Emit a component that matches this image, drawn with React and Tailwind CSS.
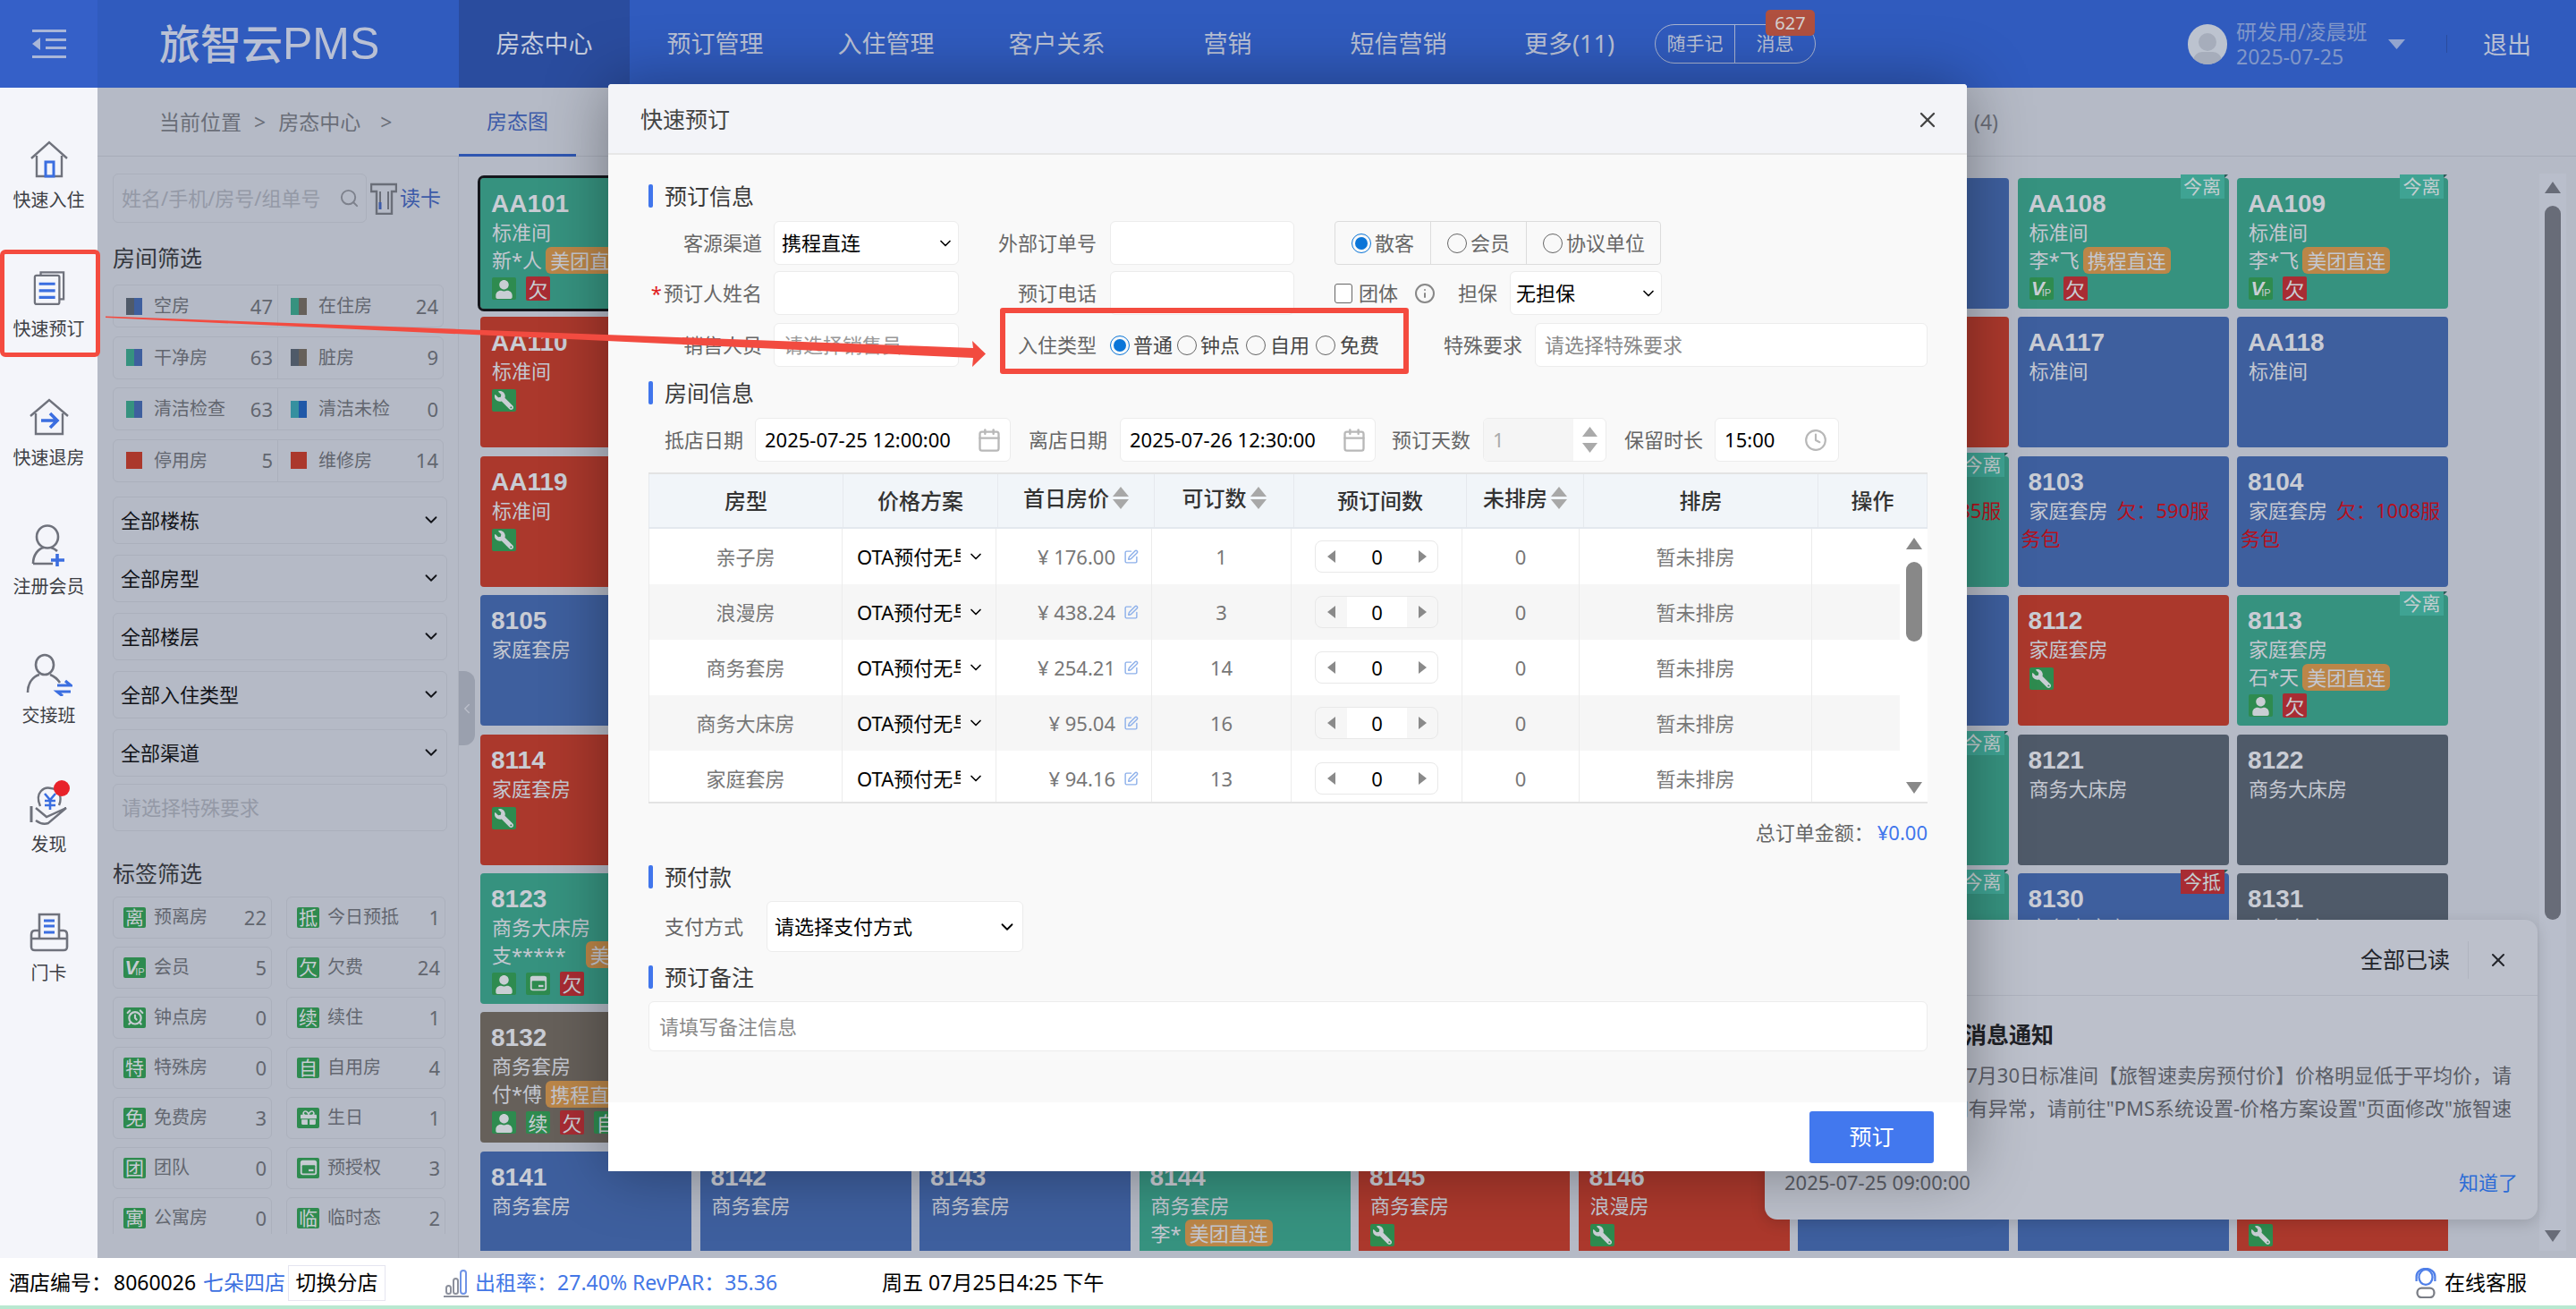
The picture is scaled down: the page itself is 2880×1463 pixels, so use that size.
import { Search, ChevronDown, ChevronLeft, Calendar, Clock, Info, SquarePen, X, AlarmClock } from "lucide-react";
import { FaUser, FaWrench, FaGift } from "react-icons/fa";

const GREEN = "bg-[#36927f]";
const BLUE = "bg-[#3e5f9e]";
const RED = "bg-[#ab382c]";
const GRAY = "bg-[#4f5a69]";
const BROWN = "bg-[#66605a]";

const navItems = ["房态中心", "预订管理", "入住管理", "客户关系", "营销", "短信营销", "更多(11)"];

const statRows = [
  [{ a: "bg-[#4f5a69]", b: "bg-[#3e5f9e]", name: "空房", n: 47 }, { a: "bg-[#36927f]", b: "bg-[#66605a]", name: "在住房", n: 24 }],
  [{ a: "bg-[#36927f]", b: "bg-[#3e5f9e]", name: "干净房", n: 63 }, { a: "bg-[#4f5a69]", b: "bg-[#66605a]", name: "脏房", n: 9 }],
  [{ a: "bg-[#36927f]", b: "bg-[#3e5f9e]", name: "清洁检查", n: 63 }, { a: "bg-[#36909f]", b: "bg-[#1f58a8]", name: "清洁未检", n: 0 }],
  [{ a: "bg-[#ab382c]", b: "bg-[#ab382c]", name: "停用房", n: 5 }, { a: "bg-[#ab382c]", b: "bg-[#ab382c]", name: "维修房", n: 14 }],
];

const tagRows = [
  [{ i: "离", name: "预离房", n: 22 }, { i: "抵", name: "今日预抵", n: 1 }],
  [{ i: "vip", name: "会员", n: 5 }, { i: "欠", name: "欠费", n: 24 }],
  [{ i: "clock", name: "钟点房", n: 0 }, { i: "续", name: "续住", n: 1 }],
  [{ i: "特", name: "特殊房", n: 0 }, { i: "自", name: "自用房", n: 4 }],
  [{ i: "免", name: "免费房", n: 3 }, { i: "gift", name: "生日", n: 1 }],
  [{ i: "团", name: "团队", n: 0 }, { i: "card", name: "预授权", n: 3 }],
  [{ i: "寓", name: "公寓房", n: 0 }, { i: "临", name: "临时态", n: 2 }],
];

// 8 rows x 9 cols, cards fully under the modal or the popup stay blank
const hidden = { c: BLUE };
const rooms = [
  [
    { no: "AA101", type: "标准间", c: GREEN, guest: "新*人", ch: "美团直连", icons: ["user", "owe"], selected: true },
    hidden, hidden, hidden, hidden, hidden, hidden,
    { no: "AA108", type: "标准间", c: GREEN, guest: "李*飞", ch: "携程直连", icons: ["vip", "owe"], corner: "今离" },
    { no: "AA109", type: "标准间", c: GREEN, guest: "李*飞", ch: "美团直连", icons: ["vip", "owe"], corner: "今离" },
  ],
  [
    { no: "AA110", type: "标准间", c: RED, icons: ["wrench"] },
    hidden, hidden, hidden, hidden, hidden,
    { c: RED },
    { no: "AA117", type: "标准间", c: BLUE }, { no: "AA118", type: "标准间", c: BLUE },
  ],
  [
    { no: "AA119", type: "标准间", c: RED, icons: ["wrench"] },
    hidden, hidden, hidden, hidden, hidden,
    { no: "8102", type: "家庭套房", c: GREEN, owe: "欠：1085服务包", corner: "今离" },
    { no: "8103", type: "家庭套房", c: BLUE, owe: "欠：590服务包" },
    { no: "8104", type: "家庭套房", c: BLUE, owe: "欠：1008服务包" },
  ],
  [
    { no: "8105", type: "家庭套房", c: BLUE },
    hidden, hidden, hidden, hidden, hidden, hidden,
    { no: "8112", type: "家庭套房", c: RED, icons: ["wrench"] },
    { no: "8113", type: "家庭套房", c: GREEN, guest: "石*天", ch: "美团直连", icons: ["user", "owe"], corner: "今离" },
  ],
  [
    { no: "8114", type: "家庭套房", c: RED, icons: ["wrench"] },
    hidden, hidden, hidden, hidden, hidden,
    { c: GREEN, corner: "今离" },
    { no: "8121", type: "商务大床房", c: GRAY }, { no: "8122", type: "商务大床房", c: GRAY },
  ],
  [
    { no: "8123", type: "商务大床房", c: GREEN, guest: "支*****", ch: "美团直连", icons: ["user", "card", "owe"], gap: true },
    hidden, hidden, hidden, hidden, hidden,
    { c: GREEN, corner: "今离" },
    { no: "8130", type: "商务大床房", c: BLUE, corner: "今抵" },
    { no: "8131", type: "商务套房", c: GRAY },
  ],
  [
    { no: "8132", type: "商务套房", c: BROWN, guest: "付*傅", ch: "携程直连", icons: ["user", "xu", "owe", "zi"] },
    hidden, hidden, hidden, hidden, hidden, hidden, hidden, hidden,
  ],
  [
    { no: "8141", type: "商务套房", c: BLUE }, { no: "8142", type: "商务套房", c: BLUE }, { no: "8143", type: "商务套房", c: BLUE },
    { no: "8144", type: "商务套房", c: GREEN, guest: "李*", ch: "美团直连" },
    { no: "8145", type: "商务套房", c: RED, icons: ["wrench"] },
    { no: "8146", type: "浪漫房", c: RED, icons: ["wrench"] },
    hidden, hidden,
    { c: RED, blankHead: true, icons: ["wrench"] },
  ],
];

const tableRows = [
  { name: "亲子房", price: "¥ 176.00", left: 1 },
  { name: "浪漫房", price: "¥ 438.24", left: 3 },
  { name: "商务套房", price: "¥ 254.21", left: 14 },
  { name: "商务大床房", price: "¥ 95.04", left: 16 },
  { name: "家庭套房", price: "¥ 94.16", left: 13 },
];

function CardGlyph({ className }) {
  return (
    <svg viewBox="0 0 24 24" className={className}>
      <rect x="2" y="3" width="20" height="18" rx="3" fill="currentColor" />
      <rect x="4" y="9" width="16" height="10" rx="1" fill="#2e8b4f" />
      <rect x="12" y="14" width="6" height="2.5" fill="currentColor" />
    </svg>
  );
}

function VipGlyph() {
  return (
    <span className="flex items-end h-[23px] [font-family:'Liberation_Sans',sans-serif] leading-none">
      <span className="text-[22px] font-bold italic">V</span>
      <span className="text-[11px] -ml-[3px] mb-[1px]">IP</span>
    </span>
  );
}

function TagIcon({ i }) {
  let body = <span className="text-[21px] leading-[23px]">{i}</span>;
  if (i === "vip") body = <VipGlyph />;
  if (i === "clock") body = <AlarmClock size={20} strokeWidth={2.6} />;
  if (i === "gift") body = <FaGift size={18} />;
  if (i === "card") body = <CardGlyph className="w-[22px] h-[22px]" />;
  return (
    <span className="w-[25px] h-[23px] shrink-0 rounded-[2px] bg-[#2e8b4f] text-[#c6ccd2] flex items-center justify-center">
      {body}
    </span>
  );
}

function RoomIcon({ k }) {
  const green = "w-[27px] h-[25px] rounded-[2px] bg-[#2e8b4f] text-[#c9ced4] flex items-center justify-center overflow-hidden";
  if (k === "owe") {
    return <span className="w-[27px] h-[27px] -my-[1px] rounded-[2px] bg-[#a82c33] text-[#c9ced4] text-[22px] leading-none flex items-center justify-center">欠</span>;
  }
  if (k === "user") return <span className={green}><FaUser size={21} className="mt-[2px]" /></span>;
  if (k === "wrench") return <span className={green}><FaWrench size={21} className="-scale-x-100" /></span>;
  if (k === "vip") return <span className={green}><VipGlyph /></span>;
  if (k === "card") return <span className={green}><CardGlyph className="w-[22px] h-[22px]" /></span>;
  return <span className={green + " text-[22px] leading-none"}>{k === "xu" ? "续" : "自"}</span>;
}

function RoomCard({ room }) {
  return (
    <div className={`relative h-[146px] rounded-[4px] ${room.c} pt-[12px] ${room.selected ? "outline-[3px] outline-[#14171c]" : ""}`}>
      {room.corner && (
        <div className={`absolute -top-[4px] right-[5px] w-[49px] h-[27px] text-[21px] leading-[27px] text-center text-[#c4ced0] ${room.corner === "今抵" ? "bg-[#a82c33]" : "bg-[#3fa393]"}`}>
          {room.corner}
          <span className="absolute top-0 -right-[4px] border-l-[4px] border-b-[4px] border-l-[#2a5c58] border-b-transparent" />
        </div>
      )}
      <div className="h-[33px] pl-[12px] text-[28px] leading-[33px] font-bold text-[#c9ccd4] [font-family:'Liberation_Sans',sans-serif]">{room.no}</div>
      <div className={`px-[4px] text-[22px] leading-[31px] text-[#c4c7d0] ${room.type || room.blankHead ? "min-h-[31px]" : ""}`}>
        {room.type && <span className="ml-[9px]">{room.type}</span>}
        {room.owe && <span className="ml-[10px] text-[#b5101c]">{room.owe}</span>}
      </div>
      {room.guest && (
        <div className="pl-[13px] h-[31px] flex items-center whitespace-nowrap overflow-hidden text-[22px] leading-[31px] text-[#c4c7d0]">
          <span>{room.guest}</span>
          <span className={`h-[30px] px-[5px] rounded-[6px] bg-[#bb8648] leading-[30px] ${room.gap ? "ml-[22px]" : "ml-[4px]"}`}>{room.ch}</span>
        </div>
      )}
      {room.icons && (
        <div className={`pl-[13px] flex gap-[11px] ${room.guest ? "mt-[4px]" : "mt-[5px]"}`}>
          {room.icons.map((k, idx) => <RoomIcon k={k} key={idx} />)}
        </div>
      )}
    </div>
  );
}

function SideItem({ icon, label }) {
  return (
    <div className="h-[144px] flex flex-col items-center justify-center">
      <div className="h-[46px] flex items-center justify-center">{icon}</div>
      <div className="mt-[9px] text-[20px] leading-[28px] text-[#3d3f45]">{label}</div>
    </div>
  );
}

function Tri({ dir = "up", className }) {
  const pts = { up: "6,0 12,12 0,12", down: "0,0 12,0 6,12", left: "12,0 12,12 0,6", right: "0,0 0,12 12,6" };
  return (
    <svg viewBox="0 0 12 12" preserveAspectRatio="none" className={className}>
      <polygon points={pts[dir]} fill="currentColor" />
    </svg>
  );
}

function SectionTitle({ children }) {
  return (
    <div className="flex items-center h-[26px]">
      <span className="w-[5px] h-[26px] rounded-[2px] bg-[#4176ec]" />
      <span className="ml-[13px] text-[25px] leading-[26px] text-[#3a3a3a]">{children}</span>
    </div>
  );
}

function Field({ className = "", children }) {
  return <div className={`bg-white border border-[#ececec] rounded-[6px] flex items-center text-[22px] text-black shrink-0 ${className}`}>{children}</div>;
}

function Radio({ checked }) {
  return (
    <span className={`w-[22px] h-[22px] shrink-0 rounded-full border-[1.5px] flex items-center justify-center ${checked ? "border-[#0a75d8]" : "border-[#666]"}`}>
      {checked && <span className="w-[14px] h-[14px] rounded-full bg-[#0a75d8]" />}
    </span>
  );
}

function Label({ className = "", children }) {
  return <div className={`text-[22px] text-[#666] text-right shrink-0 whitespace-nowrap ${className}`}>{children}</div>;
}

function SortHead({ children }) {
  return (
    <div className="flex items-center justify-center gap-[4px]">
      <span className="-mt-[6px]">{children}</span>
      <span className="flex flex-col gap-[3px] -mt-[6px] text-[#a8a8a8]">
        <Tri className="w-[18px] h-[11px]" />
        <Tri dir="down" className="w-[18px] h-[11px]" />
      </span>
    </div>
  );
}

export default function App() {
  return (
    <div className="relative w-[2880px] h-[1463px] overflow-hidden flex flex-col bg-white [font-family:'Noto_Sans','Noto_Sans_CJK_SC',sans-serif]">
      {/* top bar */}
      <header className="h-[98px] shrink-0 flex items-center bg-[#305bbe] text-[#b9c0d4]">
        <div className="w-[109px] h-full flex items-center justify-center bg-[#3560c8]">
          <svg viewBox="0 0 38 32" className="w-[38px] h-[32px] text-[#a9b6d8]">
            <rect x="0" y="0" width="38" height="3" fill="currentColor" />
            <rect x="15" y="10" width="23" height="3" fill="currentColor" />
            <rect x="15" y="19" width="23" height="3" fill="currentColor" />
            <rect x="0" y="29" width="38" height="3" fill="currentColor" />
            <polygon points="9,9 9,23 0,16" fill="currentColor" />
          </svg>
        </div>
        <div className="w-[404px] pl-[69px] text-[46px] leading-none whitespace-nowrap font-medium">
          旅智云<span className="text-[50px] [font-family:'Liberation_Sans',sans-serif] font-normal">PMS</span>
        </div>
        <nav className="flex h-full">
          {navItems.map((item, idx) => (
            <div key={item} className={`w-[191px] h-full flex items-center justify-center text-[27px] ${idx === 0 ? "bg-[#2a4c9e] text-[#c4cbdc]" : ""}`}>{item}</div>
          ))}
        </nav>
        <div className="relative w-[180px] h-[44px] flex items-center rounded-[22px] border border-[#a9b4d0] text-[21px]">
          <div className="w-[89px] h-full flex items-center justify-center border-r border-[#a9b4d0]">随手记</div>
          <div className="flex-1 flex items-center justify-center">消息</div>
          <span className="absolute -top-[17px] right-0 w-[55px] h-[29px] rounded-[5px] bg-[#b0503f] text-[20px] leading-[29px] text-center text-[#d5d0d0]">627</span>
        </div>
        <div className="ml-auto flex items-center pr-[50px]">
          <div className="relative w-[44px] h-[45px] rounded-full bg-[#bcc3cf] overflow-hidden">
            <span className="absolute left-[12px] top-[10px] w-[20px] h-[20px] rounded-full bg-[#a6adbb]" />
            <span className="absolute left-[6px] top-[31px] w-[32px] h-[20px] rounded-full bg-[#a6adbb]" />
          </div>
          <div className="ml-[10px] w-[170px] text-[#8197c8]">
            <div className="text-[23px] leading-[28px] whitespace-nowrap">研发用/凌晨班</div>
            <div className="text-[23px] leading-[28px]">2025-07-25</div>
          </div>
          <Tri dir="down" className="w-[19px] h-[11px] text-[#93a5cf]" />
          <span className="ml-[46px] w-px h-[20px] bg-[#2a4c9e]" />
          <span className="ml-[40px] text-[27px] leading-none">退出</span>
        </div>
      </header>

      <div className="flex-1 min-h-0 flex">
        {/* sidebar, stays above the mask */}
        <aside className="relative z-20 w-[109px] shrink-0 bg-[#f4f5fa] pt-[26px]">
          <SideItem label="快速入住" icon={
            <svg viewBox="0 0 42 42" fill="none" className="w-[42px] h-[42px]" stroke="#6f727c" strokeWidth="2.4">
              <path d="M1 20 L21 2 L41 20" />
              <path d="M7 17 V40 H35 V17" />
              <rect x="17" y="24" width="9" height="16" stroke="#3b6ee0" strokeWidth="3" />
            </svg>
          } />
          <SideItem label="快速预订" icon={
            <svg viewBox="0 0 38 40" fill="none" className="w-[36px] h-[38px]" stroke="#6f727c" strokeWidth="2.4">
              <path d="M9 5 V1.5 H36 V33 H31" />
              <rect x="2" y="5" width="29" height="34" rx="2" />
              <path d="M7 15 H26 M7 23 H26 M7 31 H26" stroke="#3b6ee0" strokeWidth="3.4" />
            </svg>
          } />
          <SideItem label="快速退房" icon={
            <svg viewBox="0 0 44 42" fill="none" className="w-[44px] h-[42px]" stroke="#6f727c" strokeWidth="2.4">
              <path d="M1 20 L22 2 L43 20" />
              <path d="M7 17 V40 H37 V17" />
              <path d="M13 25 H30 M23 17 L31 25 L23 33" stroke="#3b6ee0" strokeWidth="3.6" />
            </svg>
          } />
          <SideItem label="注册会员" icon={
            <svg viewBox="0 0 40 48" fill="none" className="w-[40px] h-[48px]" stroke="#6f727c" strokeWidth="2.6">
              <ellipse cx="18" cy="14" rx="12" ry="12.5" />
              <path d="M2 44 C2 34 8 27 14 26 M22 26 C25 27 27 28 29 30 M2 44 H24" />
              <path d="M29 33 V47 M22 40 H37" stroke="#3b6ee0" strokeWidth="3.6" />
            </svg>
          } />
          <SideItem label="交接班" icon={
            <svg viewBox="0 0 52 48" fill="none" className="w-[52px] h-[48px]" stroke="#6f727c" strokeWidth="2.6">
              <ellipse cx="21" cy="13" rx="10" ry="11" />
              <path d="M2 44 C2 33 8 26 15 24 M27 24 C32 26 36 30 38 33" />
              <path d="M35 36 H50 L44 31 M50 43 H35 L41 48" stroke="#3b6ee0" strokeWidth="3.2" />
            </svg>
          } />
          <SideItem label="发现" icon={
            <div className="relative w-[50px] h-[50px]">
              <svg viewBox="0 0 50 50" fill="none" className="w-[50px] h-[50px]" stroke="#6f727c" strokeWidth="2.4">
                <path d="M15 28 C8 12 20 6 27 8 C36 9 40 18 36 27" />
                <path d="M5 28 V46" strokeWidth="3" />
                <path d="M10 30 L22 40 L44 30 L24 47 C18 49 14 47 10 44" />
                <path d="M20 14 L26 21 L32 14 M26 21 V32 M20 22 H32 M20 27 H32" stroke="#3b6ee0" strokeWidth="2.6" />
              </svg>
              <span className="absolute -top-[1px] right-[2px] w-[18px] h-[18px] rounded-full bg-[#e8222a]" />
            </div>
          } />
          <SideItem label="门卡" icon={
            <svg viewBox="0 0 44 44" fill="none" className="w-[44px] h-[44px]" stroke="#6f727c" strokeWidth="2.6">
              <path d="M11 29 V2 H33 V29" />
              <path d="M11 20 H6 C3 20 2 22 2 25 V38 C2 41 3 42 6 42 H38 C41 42 42 41 42 38 V25 C42 22 41 20 38 20 H33 M2 29 H42" />
              <path d="M16 9 H28 M16 15 H28 M16 22 H28" stroke="#3b6ee0" strokeWidth="3" />
            </svg>
          } />
        </aside>

        <main className="relative flex-1 min-w-0 flex flex-col bg-[#b5bac6]">
          <div className="h-[77px] shrink-0 flex border-b border-[#a7acb8]">
            <div className="w-[404px] pl-[69px] flex items-center text-[23px] text-[#6a6e78] whitespace-nowrap">
              <span>当前位置</span>
              <span className="ml-[14px]">&gt;</span>
              <span className="ml-[14px]">房态中心</span>
              <span className="ml-[22px]">&gt;</span>
            </div>
            <div className="w-[131px] border-b-[3px] border-[#2f56b0] -mb-px flex items-center justify-center text-[23px] text-[#3c5aa8]">房态图</div>
            <div className="ml-auto mr-[646px] self-center text-[23px] text-[#6a6e78]">(4)</div>
          </div>

          <div className="flex-1 min-h-0 flex">
            {/* filter panel */}
            <div className="w-[404px] shrink-0 border-r border-[#abb0bc] pl-[17px] pt-[19px]">
              <div className="flex items-center">
                <div className="w-[284px] h-[55px] rounded-[6px] border border-[#abb0bc] flex items-center pl-[9px] text-[22px] text-[#9499a6] whitespace-nowrap">
                  <span className="w-[243px]">姓名/手机/房号/组单号</span>
                  <Search size={23} className="text-[#7d818c]" />
                </div>
                <svg viewBox="0 0 30 36" fill="none" className="ml-[4px] w-[30px] h-[36px]">
                  <path d="M1 2 H29 V10 H24 V35 H7 V10 H1 Z" stroke="#6a6e78" strokeWidth="2.4" />
                  <path d="M11 10 V30 M20 10 V30" stroke="#6a6e78" strokeWidth="2" />
                  <path d="M11 22 V30" stroke="#3c5aa8" strokeWidth="3" />
                </svg>
                <span className="ml-[3px] text-[23px] text-[#3c5aa8] whitespace-nowrap">读卡</span>
              </div>
              <div className="mt-[24px] h-[30px] text-[25px] leading-[30px] text-[#33363d]">房间筛选</div>
              <div className="mt-[15px] w-[370px] flex flex-col gap-[9.5px]">
                {statRows.map((row, idx) => (
                  <div key={idx} className="h-[48px] rounded-[6px] border border-[#abb0bc] grid grid-cols-2">
                    {row.map((s, j) => (
                      <div key={s.name} className={`flex items-center pl-[14px] pr-[5px] text-[20px] text-[#62666f] ${j === 0 ? "border-r border-[#abb0bc]" : ""}`}>
                        <span className="w-[18px] h-[19px] flex mr-[13px] shrink-0">
                          <span className={`flex-1 ${s.a}`} />
                          <span className={`flex-1 ${s.b}`} />
                        </span>
                        <span className="flex-1 whitespace-nowrap">{s.name}</span>
                        <span className="text-[22px]">{s.n}</span>
                      </div>
                    ))}
                  </div>
                ))}
              </div>
              <div className="mt-[16px] w-[374px] flex flex-col gap-[12px]">
                {["全部楼栋", "全部房型", "全部楼层", "全部入住类型", "全部渠道"].map((s) => (
                  <div key={s} className="h-[53px] rounded-[6px] border border-[#abb0bc] flex items-center justify-between pl-[8px] pr-[6px] text-[22px] text-[#111318]">
                    <span>{s}</span>
                    <ChevronDown size={22} />
                  </div>
                ))}
              </div>
              <div className="mt-[8px] w-[374px] h-[53px] rounded-[6px] border border-[#abb0bc] flex items-center pl-[9px] text-[22px] text-[#9499a6]">请选择特殊要求</div>
              <div className="mt-[32px] h-[30px] text-[25px] leading-[30px] text-[#33363d]">标签筛选</div>
              <div className="mt-[11px] h-[377px] overflow-hidden grid grid-cols-[178px_178px] gap-x-[16px] gap-y-[9px] auto-rows-[47px]">
                {tagRows.flat().map((t) => (
                  <div key={t.name} className="rounded-[6px] border border-[#abb0bc] flex items-center pl-[11px] pr-[5px] text-[20px] text-[#62666f]">
                    <TagIcon i={t.i} />
                    <span className="ml-[9px] flex-1 whitespace-nowrap">{t.name}</span>
                    <span className="text-[22px]">{t.n}</span>
                  </div>
                ))}
              </div>
            </div>

            {/* room grid */}
            <div className="relative flex-1 min-w-0 flex pl-[24px] pt-[19px]">
              <span className="absolute left-0 top-[575px] w-[18px] h-[83px] rounded-r-[12px] bg-[#9aa0ae] flex items-center text-[#b9bdc8]">
                <ChevronLeft size={18} />
              </span>
              <div className="w-[2305px] h-[1204px] pt-[5px] pl-[3px] -ml-[3px] overflow-hidden shrink-0">
                <div className="grid grid-cols-[repeat(9,236px)] gap-x-[9.5px] gap-y-[9.4px] auto-rows-[146px]">
                  {rooms.flat().map((room, idx) => <RoomCard room={room} key={idx} />)}
                </div>
              </div>
              <div className="w-[30px] h-[1204px] shrink-0 bg-[#b9becb] flex flex-col items-center pt-[9px] text-[#686c78]">
                <Tri className="w-[18px] h-[13px]" />
                <span className="mt-[14px] w-[18px] h-[798px] rounded-[9px] bg-[#686c78]" />
                <Tri dir="down" className="mt-auto mb-[10px] w-[18px] h-[13px]" />
              </div>
            </div>
          </div>
        </main>
      </div>

      {/* bottom status bar */}
      <footer className="relative z-20 h-[57px] shrink-0 pt-[2px] bg-white border-b-[4px] border-[#b9e8d0] flex items-center text-[23px] text-black">
        <span className="ml-[10px]">酒店编号：</span>
        <span className="ml-[2px]">8060026</span>
        <span className="ml-[8px] text-[#3c6fe0]">七朵四店</span>
        <span className="ml-[3px] w-[109px] h-[40px] border border-[#e5e5f0] flex items-center justify-center">切换分店</span>
        <svg viewBox="0 0 28 32" fill="none" className="ml-[65px] w-[28px] h-[32px]" stroke="#8c909c" strokeWidth="2">
          <rect x="3" y="19" width="5" height="9" rx="2.5" />
          <rect x="11" y="11" width="5" height="17" rx="2.5" />
          <rect x="19" y="2" width="6" height="26" rx="3" stroke="#6f93e6" />
          <path d="M0 31 H28" />
        </svg>
        <span className="ml-[7px] w-[455px] text-[#4477e6] whitespace-nowrap">出租率：27.40% RevPAR：35.36</span>
        <span className="whitespace-nowrap">周五 07月25日4:25 下午</span>
        <span className="ml-auto flex items-center mr-[55px]">
          <svg viewBox="0 0 26 36" fill="none" className="w-[26px] h-[34px]" strokeWidth="2.4">
            <ellipse cx="13" cy="11" rx="8" ry="9" stroke="#4f7fe8" />
            <path d="M2 16 V10 C2 4 8 1 13 1 C18 1 24 4 24 10 V16" stroke="#4f7fe8" />
            <rect x="3" y="24" width="20" height="11" rx="5" stroke="#7a7d85" />
          </svg>
          <span className="ml-[8px]">在线客服</span>
        </span>
      </footer>

      {/* message popup behind the mask */}
      <div className="absolute left-[1973px] top-[1028px] w-[864px] h-[335px] rounded-[14px] bg-[#bcc0cb] shadow-[0_4px_16px_rgba(0,0,0,0.15)] flex flex-col">
        <div className="h-[85px] shrink-0 pt-[6px] border-b border-[#aeb2be] flex items-center justify-end pr-[32px] text-[#23252b]">
          <span className="text-[25px]">全部已读</span>
          <span className="ml-[20px] w-px h-[42px] bg-[#b0b4bf]" />
          <X size={24} className="ml-[21px]" />
        </div>
        <div className="mt-[27px] pl-[23px] text-[25px] leading-[32px] font-bold text-[#1f2126]">价格方案房价异常消息通知</div>
        <div className="mt-[11px] pr-[29px] flex flex-col items-end text-[22px] leading-[37px] text-[#5a5d66] whitespace-nowrap">
          <span>您的门店2025年7月30日标准间【旅智速卖房预付价】价格明显低于平均价，请</span>
          <span>及时确认价格，如有异常，请前往"PMS系统设置-价格方案设置"页面修改"旅智速</span>
        </div>
        <div className="mt-auto mb-[25px] px-[22px] flex items-center justify-between text-[22px]">
          <span className="text-[#5a5d66]">2025-07-25 09:00:00</span>
          <span className="text-[#2c6cd6]">知道了</span>
        </div>
      </div>

      {/* quick booking modal */}
      <div className="absolute left-[680px] top-[94px] w-[1519px] h-[1215px] bg-white rounded-t-[4px] flex flex-col shadow-[0_0_70px_rgba(0,0,0,0.35)]">
        <div className="h-[79px] shrink-0 pt-[2px] bg-[#f3f4f8] border-b-2 border-[#e7e7e7] rounded-t-[4px] flex items-center justify-between pl-[36px] pr-[30px]">
          <span className="text-[25px] text-[#444]">快速预订</span>
          <X size={28} className="text-[#444]" />
        </div>

        <div className="h-[1059px] shrink-0 bg-[#f9f9f9] pl-[45px] pr-[44px] pt-[33px]">
          <SectionTitle>预订信息</SectionTitle>

          <div className="mt-[15px] flex items-center h-[49px]">
            <Label className="w-[127px]">客源渠道</Label>
            <Field className="ml-[13px] w-[207px] h-[49px] pl-[8px] pr-[4px] justify-between">携程直连<ChevronDown size={20} /></Field>
            <Label className="w-[154px]">外部订单号</Label>
            <Field className="ml-[15px] w-[206px] h-[49px]" />
            <div className="ml-[45px] w-[365px] h-[49px] rounded-[4px] border border-[#dcdcdc] flex text-[22px] text-[#666]">
              <div className="w-[107px] pl-[18px] flex items-center gap-[4px] border-r border-[#dcdcdc]"><Radio checked />散客</div>
              <div className="w-[107px] pl-[18px] flex items-center gap-[4px] border-r border-[#dcdcdc]"><Radio />会员</div>
              <div className="flex-1 pl-[18px] flex items-center gap-[4px] whitespace-nowrap"><Radio />协议单位</div>
            </div>
          </div>

          <div className="mt-[7px] flex items-center h-[49px]">
            <Label className="w-[127px]"><span className="text-[#e01c1c] mr-[2px]">*</span>预订人姓名</Label>
            <Field className="ml-[13px] w-[207px] h-[49px]" />
            <Label className="w-[154px]">预订电话</Label>
            <Field className="ml-[15px] w-[206px] h-[49px]" />
            <span className="ml-[45px] w-[20px] h-[22px] rounded-[3px] border-[1.5px] border-[#666] bg-white" />
            <span className="ml-[7px] text-[22px] text-[#666]">团体</span>
            <Info size={24} className="ml-[18px] text-[#888]" />
            <span className="ml-[25px] text-[22px] text-[#666]">担保</span>
            <Field className="ml-[14px] w-[170px] h-[49px] pl-[6px] pr-[4px] justify-between">无担保<ChevronDown size={20} /></Field>
          </div>

          <div className="mt-[9px] flex items-center h-[49px]">
            <Label className="w-[127px]">销售人员</Label>
            <Field className="ml-[13px] w-[207px] h-[49px] pl-[10px] !text-[#999]">请选择销售员</Field>
            <Label className="w-[154px]">入住类型</Label>
            <div className="ml-[15px] w-[373px] flex items-center text-[22px] text-[#444]">
              <Radio checked /><span className="ml-[4px] w-[49px]">普通</span>
              <Radio /><span className="ml-[4px] w-[51px]">钟点</span>
              <Radio /><span className="ml-[5px] w-[51px]">自用</span>
              <Radio /><span className="ml-[5px]">免费</span>
            </div>
            <Label className="w-[88px]">特殊要求</Label>
            <Field className="ml-[14px] flex-1 !shrink h-[49px] pl-[10px] !text-[#888]">请选择特殊要求</Field>
          </div>

          <div className="mt-[16px]"><SectionTitle>房间信息</SectionTitle></div>

          <div className="mt-[15px] pl-[18px] flex items-center h-[49px]">
            <Label>抵店日期</Label>
            <Field className="ml-[13px] w-[286px] h-[49px] pl-[10px] justify-between pr-[9px]">2025-07-25 12:00:00<Calendar size={28} className="text-[#b8b8b8]" /></Field>
            <Label className="ml-[20px]">离店日期</Label>
            <Field className="ml-[14px] w-[286px] h-[49px] pl-[10px] justify-between pr-[9px]">2025-07-26 12:30:00<Calendar size={28} className="text-[#b8b8b8]" /></Field>
            <Label className="ml-[18px]">预订天数</Label>
            <div className="ml-[14px] w-[138px] h-[49px] rounded-[6px] border border-[#ececec] bg-white flex shrink-0 overflow-hidden">
              <div className="flex-1 bg-[#f5f5f5] pl-[10px] flex items-center text-[22px] text-[#aaa]">1</div>
              <div className="w-[36px] flex flex-col items-center justify-around py-[6px] text-[#aaa]">
                <Tri className="w-[17px] h-[11px]" />
                <Tri dir="down" className="w-[17px] h-[11px]" />
              </div>
            </div>
            <Label className="ml-[20px]">保留时长</Label>
            <Field className="ml-[13px] w-[139px] h-[49px] pl-[10px] justify-between pr-[12px]">15:00<Clock size={26} className="text-[#b8b8b8]" /></Field>
          </div>

          {/* room table */}
          <div className="mt-[12px] w-[1430px] border-t-2 border-[#e3e3e3] bg-white">
            <div className="h-[61px] bg-[#f1f5f9] border-b-2 border-[#e3e8ee] grid grid-cols-[218px_173px_175px_156px_193px_131px_262px_122px] text-[24px] font-medium text-[#333]">
              <div className="flex items-center justify-center border-x border-[#e6e9ee]">房型</div>
              <div className="flex items-center justify-center border-r border-[#e6e9ee]">价格方案</div>
              <div className="flex items-center justify-center border-r border-[#e6e9ee]"><SortHead>首日房价</SortHead></div>
              <div className="flex items-center justify-center border-r border-[#e6e9ee]"><SortHead>可订数</SortHead></div>
              <div className="flex items-center justify-center border-r border-[#e6e9ee]">预订间数</div>
              <div className="flex items-center justify-center border-r border-[#e6e9ee]"><SortHead>未排房</SortHead></div>
              <div className="flex items-center justify-center border-r border-[#e6e9ee]">排房</div>
              <div className="flex items-center justify-center border-r border-[#e6e9ee]">操作</div>
            </div>
            <div className="relative h-[307px] overflow-hidden border-b-2 border-[#e3e3e3]">
              {tableRows.map((r, idx) => (
                <div key={r.name} className={`h-[62px] w-[1399px] grid grid-cols-[217px_172px_174px_156px_191px_131px_260px_98px] text-[22px] text-[#777] ${idx % 2 === 1 ? "bg-[#f6f6f6]" : "bg-white"}`}>
                  <div className="flex items-center justify-center border-x border-[#ececec]">{r.name}</div>
                  <div className="flex items-center pl-[16px] border-r border-[#ececec] text-black">
                    <span className="w-[116px] overflow-hidden whitespace-nowrap">OTA预付无早</span>
                    <ChevronDown size={20} className="ml-[7px] shrink-0" />
                  </div>
                  <div className="flex items-center justify-end pr-[14px] border-r border-[#ececec]">
                    <span>{r.price}</span>
                    <SquarePen size={17} className="ml-[9px] text-[#8db0ea]" />
                  </div>
                  <div className="flex items-center justify-center border-r border-[#ececec]">{r.left}</div>
                  <div className="flex items-center justify-center border-r border-[#ececec]">
                    <div className="w-[138px] h-[36px] rounded-[8px] border border-[#e8e8e8] flex items-center text-[#8a8a8a] overflow-hidden">
                      <span className="w-[35px] flex justify-center"><Tri dir="left" className="w-[9px] h-[14px]" /></span>
                      <span className="w-[67px] h-full bg-white text-black flex items-center justify-center">0</span>
                      <span className="flex-1 flex justify-center"><Tri dir="right" className="w-[9px] h-[14px]" /></span>
                    </div>
                  </div>
                  <div className="flex items-center justify-center border-r border-[#ececec]">0</div>
                  <div className="flex items-center justify-center border-r border-[#ececec]">暂未排房</div>
                  <div />
                </div>
              ))}
              <div className="absolute right-0 top-0 w-[31px] h-full flex flex-col items-center pt-[10px] text-[#888]">
                <Tri className="w-[18px] h-[13px]" />
                <span className="mt-[14px] w-[18px] h-[89px] rounded-[9px] bg-[#888]" />
                <Tri dir="down" className="mt-auto mb-[9px] w-[18px] h-[13px]" />
              </div>
            </div>
          </div>

          <div className="mt-[17px] h-[30px] flex items-center justify-end text-[22px]">
            <span className="text-[#666]">总订单金额：</span>
            <span className="ml-[4px] text-[#4176ec]">¥0.00</span>
          </div>

          <div className="mt-[22px]"><SectionTitle>预付款</SectionTitle></div>
          <div className="mt-[14px] pl-[18px] flex items-center h-[57px]">
            <Label>支付方式</Label>
            <Field className="ml-[26px] w-[287px] h-[57px] pl-[8px] pr-[6px] justify-between">请选择支付方式<ChevronDown size={22} /></Field>
          </div>

          <div className="mt-[15px]"><SectionTitle>预订备注</SectionTitle></div>
          <Field className="mt-[14px] w-[1430px] h-[56px] pl-[11px] !text-[#888]">请填写备注信息</Field>
        </div>

        <div className="flex-1 flex items-center justify-end pr-[37px]">
          <button className="w-[139px] h-[58px] rounded-[3px] bg-[#4278ee] text-white text-[25px]">预订</button>
        </div>
      </div>

      {/* red annotations drawn on the screenshot */}
      <div className="absolute z-30 left-0 top-[279px] w-[112px] h-[120px] rounded-[6px] border-[5px] border-[#f44b3f]" />
      <div className="absolute z-30 left-[1118px] top-[344px] w-[457px] h-[74px] rounded-[3px] border-[6px] border-[#f44b3f]" />
      <svg className="absolute z-30 left-0 top-0 w-[2880px] h-[1463px] pointer-events-none" viewBox="0 0 2880 1463">
        <polygon points="118,353.5 1088,389 1087,381 1102,395.5 1087,410 1088,400 118,355" fill="#f24b40" />
      </svg>
    </div>
  );
}
